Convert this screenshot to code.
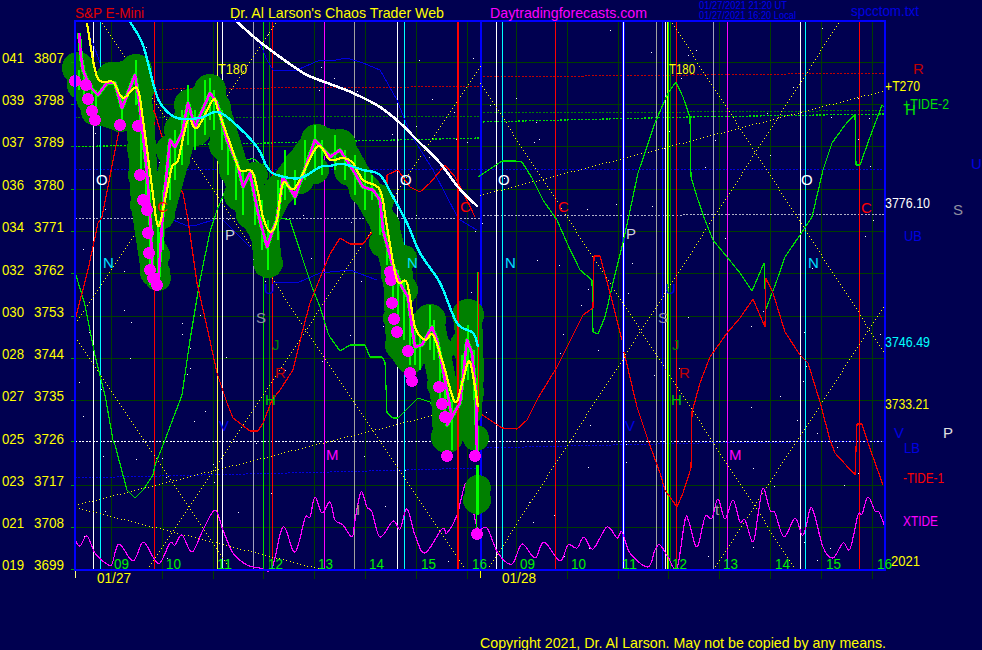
const BG = "#000050";

const gridH = [62.5, 104.5, 146.5, 189, 231, 273, 316, 358, 400, 485, 527];
const gridV = [111, 162.5, 213.5, 263, 314, 365.5, 416.5, 467, 516, 567, 618, 668, 719, 770, 821.5, 872];

const vLines: [number, string, number][] = [
  [93, "#ffffff", 1], [222, "#ffffff", 1], [397, "#ffffff", 1], [496.5, "#ffffff", 1], [800.5, "#ffffff", 1],
  [100.5, "#00ffff", 1], [404.5, "#00ffff", 1], [502.5, "#00ffff", 1], [805.5, "#00ffff", 1],
  [154.5, "#ff0000", 1], [272.5, "#ff0000", 1], [555.5, "#ff0000", 1], [676.5, "#ff0000", 1], [859.5, "#ff0000", 1],
  [217, "#ffff40", 1], [253.5, "#a0a0c0", 1], [354.5, "#a0a0a0", 1], [656.5, "#a0a0a0", 1], [713.5, "#a0a0c0", 1],
  [263.5, "#00e000", 1], [269.5, "#008000", 1],
  [324.5, "#ff00ff", 1], [727.5, "#ff00ff", 1],
  [480.5, "#0000ff", 2], [623.5, "#0000ff", 3], [623.5, "#ffffff", 1],
  [662.5, "#0000ff", 1], [665, "#ffffff", 1], [667, "#ffff00", 1], [668.5, "#00ff00", 1], [670.5, "#008000", 1],
];

const dotted: [number, number, number, number][] = [
  [75, 337, 230, 569], [75, 323, 277, 20], [100, 20, 465, 569], [147, 569, 480, 66],
  [480, 83, 795, 569], [487, 569, 840, 20], [670, 20, 885, 354], [713, 569, 885, 304],
  [75, 505, 480, 403], [480, 195, 885, 90], [75, 507, 325, 570],
];

const dashH: [string, string, number][] = [
  ["75,90 270,88 480,86.5", "#c00000", 1],
  ["480,77 690,75 885,73", "#c00000", 1],
  ["75,118 270,117 480,116.5", "#008000", 1],
  ["480,112.5 690,112 885,110.5", "#008000", 1],
  ["75,146.5 270,143 480,138", "#00e000", 1.2],
  ["480,122 690,117 885,114", "#00e000", 1.2],
  ["75,169.5 885,169.5", "#0000e0", 1],
  ["75,218 480,218", "#b0b0c8", 1],
  ["480,216 885,214", "#b0b0c8", 1],
  ["75,441 885,441", "#ffffff", 1],
  ["75,478 330,472 480,468", "#0000e0", 1],
  ["480,448 700,443 885,441", "#0000e0", 1],
];

const white = "235,20 260,42 287,62 307,75 330,84 353,93 380,107 400,123 417,140 440,163 458,187 478,207";
const cyan = "130,22 143,45 155,90 163,107 177,118 200,118 217,112 233,122 257,147 267,167 277,175 300,178 320,167 330,166 343,164 363,170 380,175 393,197 407,223 420,253 440,283 457,323 473,333 478,347";
const yellow = "87,23 95,70 102,82 113,82 123,98 137,88 143,120 152,187 158,226 165,200 172,167 178,160 188,120 197,128 213,100 218,110 230,143 240,170 253,173 263,217 270,232 277,220 283,183 295,188 317,147 330,160 343,158 353,163 363,180 380,190 387,227 397,280 407,283 415,327 425,340 433,335 443,363 455,402 463,380 470,362 478,407";
const magentaLine = "79,33 81,57 83,70 90,87 98,95 107,83 115,83 122,108 135,75 140,107 147,173 150,213 153,285 158,285 163,210 170,140 175,147 182,133 188,103 195,127 210,93 217,103 227,140 237,163 243,187 250,173 258,213 267,247 272,232 277,220 283,177 295,197 315,140 330,157 340,150 353,170 363,187 373,190 380,200 383,230 392,263 402,287 408,297 412,327 415,347 422,345 432,327 437,340 443,370 452,417 447,425 460,403 467,340 472,353 476,393 477,456";
const green1 = "75,272 85,305 95,355 105,395 113,440 115,445 127,490 135,498 143,490 153,475 155,465 165,440 182,395 190,340 200,280 210,232 217,210 230,180 240,163 253,158 263,167 277,217 290,220 302,257 312,287 320,307 328,333 330,337 340,351 350,345 365,345 370,357 382,357 385,362 387,413 393,418 398,418 418,398 430,402 440,417";
const green2 = "478,177 502,161 515,161 522,162 532,178 543,200 557,220 567,243 580,270 592,280 593,332 598,334 605,317 613,283 622,247 628,220 638,173 655,123 668,93 676,82 683,97 690,117 691,177 697,197 705,220 713,240 727,257 740,273 752,291 764,263 766,309 777,280 785,257 802,232 812,217 823,170 832,143 845,125 855,114 856,165 860,165 870,137 882,105 885,108";
const red1 = "75,320 88,270 98,223 102,217 120,125 132,90 138,92 155,113 163,140 175,182 183,193 188,220 197,283 207,327 217,373 227,403 233,418 250,431 258,431 263,423 272,400 280,390 293,370 302,333 310,303 322,273 330,254 340,238 350,244 363,244 372,232 382,232 387,220 387,175 398,170 410,187 420,192 430,183 445,165 455,177 462,190 475,217";
const red2 = "478,412 502,428 517,429 527,420 538,398 557,367 577,327 583,315 593,308 594,256 600,256 610,293 622,340";
const red3 = "624,352 637,407 648,440 660,473 665,490 677,507 683,493 691,468 692,412 700,383 710,357 727,333 740,318 753,299 765,327 766,278 773,293 785,332 800,355 808,363 820,402 830,440 835,453 855,475 857,424 862,424 868,443 883,485";
const blue = [
  "87,32 93,43 100,63",
  "127,130 137,133",
  "260,43 267,60 273,70 297,70 320,60 330,61 347,58 363,63 380,70 397,100 410,133 433,170 458,218 460,220 477,230",
  "173,220 185,225 197,225 213,220",
  "223,220 250,247",
  "273,282 297,283 320,273 330,272 350,270 377,280",
];
const xtide = "75,540 80,546 87,536 95,553 107,564 112,564 119,544 133,561 143,542 153,557 160,563 170,543 175,545 182,535 192,552 203,530 215,510 223,530 233,553 247,565 260,568 272,568 283,527 295,552 305,518 310,517 315,497 322,513 330,502 335,520 343,525 352,537 355,520 361,492 367,507 372,512 380,537 393,521 400,529 407,509 415,535 425,553 442,529 447,533 457,515 467,483 477,527 487,528 498,553 512,564 522,544 535,558 544,542 560,561 568,545 577,548 584,537 593,549 607,527 617,538 622,532 630,553 648,567 655,550 660,545 668,557 677,568 685,520 689,522 697,547 705,517 712,518 718,499 725,519 733,500 740,522 745,520 753,542 758,515 763,488 770,510 775,513 784,537 795,518 802,535 806,527 812,508 823,547 833,558 843,543 850,549 858,515 862,514 868,497 875,511 879,512 885,527";

const blobPaths = [
  "78,70 96,110 120,117 140,118 142,148 145,205 155,272",
  "96,100 112,78 135,72 140,118",
  "160,215 175,160 190,110 210,90 218,115 235,170 245,200 265,235 268,263",
  "262,225 280,190 317,140 340,145 365,190 385,225 397,275 400,345 410,360",
  "400,340 430,320 445,395 447,437",
  "455,425 468,412 470,372 468,315",
];

const blobs: [number, number, number][] = [
  [78, 68, 15], [82, 85, 14], [92, 100, 14], [96, 111, 14], [112, 78, 15], [118, 95, 14], [120, 117, 14], [136, 70, 15], [140, 88, 14], [140, 118, 14],
  [142, 148, 14], [143, 175, 14], [145, 205, 14], [150, 233, 14], [155, 255, 14], [155, 272, 14], [158, 278, 12],
  [172, 150, 15], [180, 130, 15], [190, 105, 15], [210, 90, 15], [215, 108, 15], [195, 130, 15], [175, 160, 14], [165, 190, 14], [160, 215, 14],
  [225, 145, 15], [235, 170, 15], [240, 195, 15], [260, 200, 15], [255, 175, 12], [265, 235, 14], [268, 263, 14], [250, 215, 13], [280, 190, 15],
  [300, 165, 15], [317, 140, 15], [340, 145, 15], [300, 180, 13], [315, 170, 13], [350, 170, 15], [365, 190, 15], [378, 200, 15], [385, 225, 14], [384, 243, 14],
  [397, 275, 15], [404, 258, 12], [403, 290, 14], [397, 318, 13], [400, 345, 14], [410, 360, 13], [420, 340, 12],
  [430, 320, 15], [440, 350, 13], [445, 395, 14], [440, 385, 12], [452, 410, 14], [447, 437, 15], [455, 425, 13],
  [468, 315, 15], [465, 345, 14], [470, 372, 13], [470, 392, 13], [468, 412, 13], [476, 438, 12], [478, 488, 12], [477, 500, 13],
];

const spikes: [number, number, number][] = [
  [79, 70, 90], [84, 65, 95], [92, 85, 110], [96, 90, 118], [122, 95, 125], [136, 60, 105], [141, 100, 175], [146, 150, 215], [150, 190, 285], [158, 220, 280],
  [163, 190, 250], [170, 140, 200], [175, 130, 180], [182, 110, 165], [188, 85, 145], [195, 110, 150], [205, 80, 135], [210, 78, 120], [214, 90, 130],
  [222, 110, 150], [228, 140, 175], [236, 160, 200], [243, 170, 215], [255, 175, 225], [262, 200, 250], [268, 220, 270], [278, 180, 240], [285, 150, 200],
  [295, 170, 205], [305, 140, 180], [315, 125, 170], [322, 140, 175], [335, 135, 170], [345, 150, 180], [355, 155, 195], [365, 170, 210], [372, 175, 200],
  [380, 190, 235], [387, 225, 265], [393, 260, 310], [398, 270, 320], [404, 280, 340], [410, 320, 365], [415, 330, 365], [420, 335, 370], [430, 305, 350],
  [434, 320, 360], [440, 360, 405], [445, 380, 420], [452, 400, 450], [462, 355, 400], [468, 325, 380], [474, 350, 400],
];

const dots: [number, number][] = [
  [75, 81], [86, 85], [88, 99], [92, 111], [95, 120], [120, 125], [138, 126], [140, 175], [143, 200], [147, 210], [148, 233], [149, 253], [150, 270], [153, 278], [157, 285],
  [390, 272], [391, 280], [392, 303], [394, 319], [397, 332], [408, 351], [410, 373], [412, 381], [439, 387], [442, 404], [445, 417], [447, 456], [475, 456], [477, 534],
];

function makeStars() {
  const out: [number, number][] = [];
  let s = 20210127;
  for (let i = 0; i < 160; i++) {
    s = (s * 1103515245 + 12345) % 2147483648;
    const x = 78 + (s % 805);
    s = (s * 1103515245 + 12345) % 2147483648;
    const y = 24 + (s % 543);
    out.push([x, y]);
  }
  return out;
}
const stars = makeStars();

function smooth(pts: string) {
  const p = pts.split(" ").map((s) => s.split(",").map(Number));
  let d = `M${p[0][0]} ${p[0][1]}`;
  for (let i = 0; i < p.length - 1; i++) {
    const a = p[Math.max(0, i - 1)];
    const b = p[i];
    const c = p[i + 1];
    const e = p[Math.min(p.length - 1, i + 2)];
    const c1x = b[0] + (c[0] - a[0]) / 6;
    const c1y = b[1] + (c[1] - a[1]) / 6;
    const c2x = c[0] - (e[0] - b[0]) / 6;
    const c2y = c[1] - (e[1] - b[1]) / 6;
    d += ` C${c1x.toFixed(1)} ${c1y.toFixed(1)} ${c2x.toFixed(1)} ${c2y.toFixed(1)} ${c[0]} ${c[1]}`;
  }
  return d;
}

const axis: [string, string, number][] = [
  ["041", "3807", 63], ["039", "3798", 105], ["037", "3789", 147], ["036", "3780", 190], ["034", "3771", 232], ["032", "3762", 275], ["030", "3753", 317],
  ["028", "3744", 359], ["027", "3735", 401], ["025", "3726", 444], ["023", "3717", 486], ["021", "3708", 528], ["019", "3699", 570],
];

const hours: [string, number][] = [
  ["09", 114], ["10", 166], ["11", 217], ["12", 268], ["13", 318], ["14", 369], ["15", 421], ["16", 472],
  ["09", 520], ["10", 571], ["11", 622], ["12", 672], ["13", 723], ["14", 775], ["15", 826], ["16", 877],
];

type L = [string, number, number, string, number?, number?];
const labels: L[] = [
  ["S&P E-Mini", 75, 18, "#e00000", 69],
  ["Dr. Al Larson's Chaos Trader Web", 230, 18, "#ffff00", 214],
  ["Daytradingforecasts.com", 490, 18, "#ff00ff", 157],
  ["spcctom.txt", 851, 16, "#0000e0", 68],
  ["01/27/2021 21:20 UT", 699, 9, "#0000f0", 88, 10],
  ["01/27/2021 16:20 Local", 699, 19, "#0000f0", 97, 10],
  ["T180", 218, 74, "#ffff00", 29],
  ["T180", 669, 74, "#ffff00", 26],
  ["+T270", 885, 91, "#ffff00", 35],
  ["+TIDE-2", 903, 109, "#00e000", 46],
  ["H", 905, 115, "#00e000"],
  ["R", 913, 74, "#c00000"],
  ["U", 971, 169, "#0000e0"],
  ["S", 953, 215, "#9090a0"],
  ["C", 861, 213, "#ff0000"],
  ["3776.10", 885, 208, "#ffffff", 45],
  ["UB", 904, 241, "#0000e0", 18],
  ["3746.49", 885, 347, "#00ffff", 45],
  ["3733.21", 885, 409, "#ffff00", 44],
  ["V", 894, 438, "#0000e0"],
  ["P", 943, 438, "#e0e0e0"],
  ["LB", 904, 453, "#0000e0", 16],
  ["-TIDE-1", 903, 483, "#ff0000", 41],
  ["XTIDE", 903, 526, "#ff00ff", 35],
  ["2021", 891, 566, "#ffff00", 29],
  ["01/27", 97, 583, "#ffff00", 34],
  ["01/28", 502, 583, "#ffff00", 34],
  ["Copyright 2021, Dr. Al Larson. May not be copied by any means.", 480, 648, "#ffff00", 406],
  ["O", 96, 185, "#ffffff"], ["O", 400, 185, "#ffffff"], ["O", 498, 185, "#ffffff"], ["O", 801, 185, "#ffffff"],
  ["N", 103, 268, "#00e0ff"], ["N", 407, 268, "#00e0ff"], ["N", 505, 268, "#00e0ff"], ["N", 808, 268, "#00e0ff"],
  ["P", 225, 240, "#d0d0e0"], ["P", 626, 239, "#d0d0e0"],
  ["C", 157, 212, "#ff0000"], ["C", 460, 212, "#ff0000"], ["C", 558, 212, "#ff0000"],
  ["S", 256, 323, "#9090a0"], ["S", 658, 323, "#9090a0"],
  ["U", 264, 294, "#0000e0"], ["U", 665, 294, "#0000e0"],
  ["J", 272, 350, "#008000"], ["J", 672, 350, "#008000"],
  ["R", 275, 378, "#c00000"], ["R", 679, 378, "#c00000"],
  ["H", 265, 405, "#00c000"], ["H", 671, 405, "#00c000"],
  ["V", 219, 431, "#0000e0"], ["V", 625, 431, "#0000e0"],
  ["M", 326, 460, "#ff00ff"], ["M", 729, 460, "#ff00ff"],
  ["I", 356, 515, "#a0a0a0"], ["t", 715, 515, "#a0a0a0"],
];

function Line({ p, c, w = 1, dash }: { p: string; c: string; w?: number; dash?: string }) {
  return <polyline points={p} fill="none" stroke={c} strokeWidth={w} strokeDasharray={dash} strokeLinejoin="round" strokeLinecap={w > 10 ? "round" : undefined} />;
}

function DotLine({ a }: { a: [number, number, number, number] }) {
  const [x1, y1, x2, y2] = a;
  const len = Math.hypot(x2 - x1, y2 - y1);
  const n = Math.floor(len / 3.6);
  const pts = Array.from({ length: n + 1 }, (_, i) => [x1 + ((x2 - x1) * i) / n, y1 + ((y2 - y1) * i) / n]);
  return (
    <>
      {pts.map(([x, y], i) => (
        <rect key={i} x={Math.round(x)} y={Math.round(y)} width={1} height={1} fill="#ffff00" />
      ))}
    </>
  );
}

export default function App() {
  return (
    <div className="w-[982px] h-[650px] overflow-hidden bg-[#000050] font-['Liberation_Sans',Arial,sans-serif]">
      <svg width={982} height={650} viewBox="0 0 982 650" className="block" style={{ background: BG }}>
        <g shapeRendering="crispEdges">
          {gridH.map((y) => (
            <line key={y} x1={71} x2={885} y1={y} y2={y} stroke="#003c00" strokeWidth={1} />
          ))}
          {gridV.map((x) => (
            <line key={x} x1={x} x2={x} y1={21} y2={579} stroke="#003c00" strokeWidth={1} />
          ))}
          {stars.map(([x, y], i) => (
            <rect key={i} x={x} y={y} width={1} height={1} fill="#ffffff" />
          ))}
          {dashH.map(([p, c, w], i) => (
            <Line key={i} p={p} c={c} w={w} dash="2 1.5" />
          ))}
          {vLines.map(([x, c, w], i) => (
            <line key={i} x1={x} x2={x} y1={21} y2={570} stroke={c} strokeWidth={w} />
          ))}
          {dotted.map((a, i) => (
            <DotLine key={i} a={a} />
          ))}
          {blue.map((p, i) => (
            <Line key={i} p={p} c="#0000e0" w={1} />
          ))}
          <Line p={green1} c="#00e000" w={1.2} />
          <Line p={green2} c="#00e000" w={1.2} />
          <Line p={red1} c="#f00000" w={1.2} />
          <Line p={red2} c="#f00000" w={1.2} />
          <Line p={red3} c="#f00000" w={1.2} />
          <path d={smooth(xtide)} fill="none" stroke="#ff00ff" strokeWidth={1.2} />
          {blobPaths.map((p, i) => (
            <Line key={i} p={p} c="#008000" w={28} />
          ))}
          {blobs.map(([x, y, r], i) => (
            <circle key={i} cx={x} cy={y} r={r + 1} fill="#008000" />
          ))}
          <Line p={magentaLine} c="#00ff00" w={4} />
          {spikes.map(([x, a, b], i) => (
            <line key={i} x1={x} x2={x} y1={a} y2={b} stroke="#00ff00" strokeWidth={2.5} />
          ))}
          <line x1={458} x2={458} y1={21} y2={570} stroke="#ff0000" strokeWidth={2} />
          <line x1={477} x2={477} y1={272} y2={420} stroke="#00e000" strokeWidth={1} />
          <line x1={478.5} x2={478.5} y1={272} y2={412} stroke="#ff0000" strokeWidth={1} />
          <line x1={477.5} x2={477.5} y1={465} y2={515} stroke="#00ff00" strokeWidth={3} />
          <line x1={476.5} x2={476.5} y1={515} y2={530} stroke="#00ff00" strokeWidth={1} />
          <Line p={magentaLine} c="#ff00ff" w={2.6} />
          {dots.map(([x, y], i) => (
            <circle key={i} cx={x} cy={y} r={6} fill="#ff00ff" />
          ))}
          <rect x={293} y={191} width={4} height={4} fill="#ff00ff" />
          <path d={smooth(yellow)} fill="none" stroke="#ffff00" strokeWidth={2.2} />
          <path d={smooth(cyan)} fill="none" stroke="#00ffff" strokeWidth={2.4} />
          <path d={smooth(white)} fill="none" stroke="#ffffff" strokeWidth={2.6} />
          <rect x={74} y={20} width={812} height={2} fill="#0000ff" />
          <rect x={74} y={20} width={2} height={551} fill="#0000ff" />
          <rect x={884} y={20} width={2} height={551} fill="#0000ff" />
          <rect x={74} y={569} width={812} height={2} fill="#0000ff" />
          {[...gridH, 441, 569.5].map((y) => (
            <line key={y} x1={71} x2={74} y1={y} y2={y} stroke="#00a000" strokeWidth={1} />
          ))}
          <line x1={75.5} x2={75.5} y1={571} y2={578} stroke="#ffff80" strokeWidth={1} />
          <line x1={480.5} x2={480.5} y1={571} y2={578} stroke="#ffff00" strokeWidth={1} />
        </g>
        <g fontSize={15}>
          {axis.map(([a, b, y]) => (
            <g key={b} fill="#ffff00">
              <text x={2} y={y} textLength={22} lengthAdjust="spacingAndGlyphs">{a}</text>
              <text x={34} y={y} textLength={30} lengthAdjust="spacingAndGlyphs">{b}</text>
            </g>
          ))}
          {hours.map(([t, x], i) => (
            <text key={i} x={x} y={569} fill="#00f000" textLength={15} lengthAdjust="spacingAndGlyphs">{t}</text>
          ))}
          {labels.map(([t, x, y, c, w, s], i) => (
            <text key={i} x={x} y={y} fill={c} fontSize={s ?? 15} textLength={w} lengthAdjust={w ? "spacingAndGlyphs" : undefined}>
              {t}
            </text>
          ))}
        </g>
      </svg>
    </div>
  );
}
